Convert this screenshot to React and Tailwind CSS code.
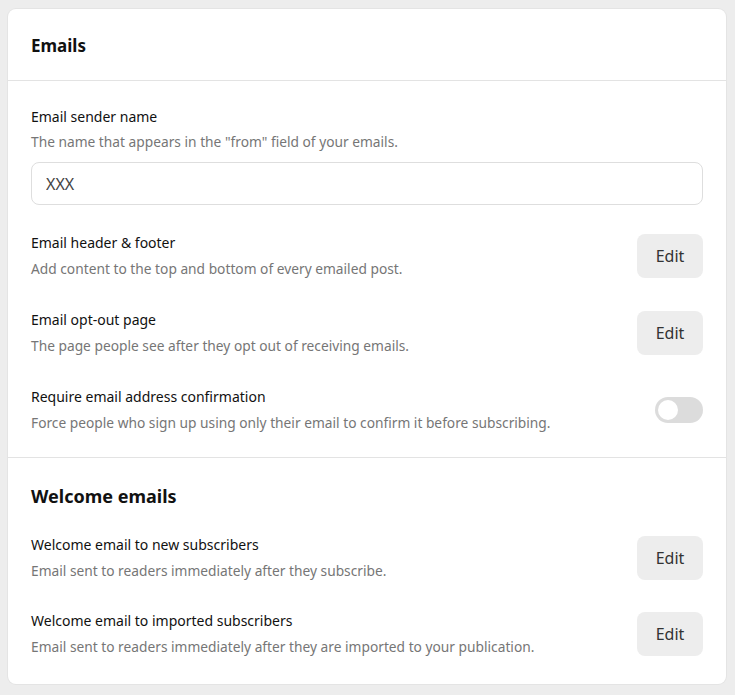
import { useState } from 'react';

const FONT = { fontFamily: '"Noto Sans", "Open Sans", sans-serif' };

function EditButton() {
  return (
    <button className="h-[44px] w-[66px] shrink-0 rounded-lg bg-[#ededed] text-[16px] text-[#333] hover:bg-[#e2e2e2]">
      Edit
    </button>
  );
}

function Toggle() {
  const [on, setOn] = useState(false);
  return (
    <button
      onClick={() => setOn(v => !v)}
      className={`relative h-[26px] w-[48px] shrink-0 rounded-full transition ${on ? 'bg-[#333]' : 'bg-[#dcdcdc]'}`}
    >
      <span
        className={`absolute top-[3px] h-[20px] w-[20px] rounded-full bg-white transition-all ${on ? 'left-[25px]' : 'left-[3px]'}`}
      />
    </button>
  );
}

function SettingRow({ title, desc, action, className = '' }) {
  return (
    <div className={`flex items-center justify-between gap-6 ${className}`}>
      <div>
        <div className="text-[14px] leading-5 text-[#111]">{title}</div>
        <div className="mt-[6px] text-[13.75px] leading-5 text-[#767676]">{desc}</div>
      </div>
      {action}
    </div>
  );
}

export default function App() {
  const [sender, setSender] = useState('XXX');

  return (
    <div className="min-h-screen bg-[#ededed] px-[8px] pt-[9px] pb-[10px]" style={FONT}>
      <div className="w-[718px] rounded-lg bg-white shadow-[0_0_0_1px_#e4e4e4]">
        <div className="flex h-[72px] items-center border-b border-[#e3e3e3] px-[23px] pt-[3px]">
          <h2 className="text-[17px] font-bold text-[#111]">Emails</h2>
        </div>

        <div className="border-b border-[#e3e3e3] px-[23px] pt-[26px] pb-[24px]">
          <div className="text-[14px] leading-5 text-[#111]">Email sender name</div>
          <div className="mt-[5px] text-[13.75px] leading-5 text-[#767676]">
            The name that appears in the "from" field of your emails.
          </div>
          <input
            value={sender}
            onChange={e => setSender(e.target.value)}
            className="mt-[10px] h-[43px] w-full rounded-lg border border-[#dedede] px-[14px] text-[16px] text-[#444] outline-none"
          />

          <SettingRow
            className="mt-[28px]"
            title="Email header & footer"
            desc="Add content to the top and bottom of every emailed post."
            action={<EditButton />}
          />
          <SettingRow
            className="mt-[31px]"
            title="Email opt-out page"
            desc="The page people see after they opt out of receiving emails."
            action={<EditButton />}
          />
          <SettingRow
            className="mt-[31px]"
            title="Require email address confirmation"
            desc="Force people who sign up using only their email to confirm it before subscribing."
            action={<Toggle />}
          />
        </div>

        <div className="px-[23px] pt-[26px] pb-[27px]">
          <h2 className="text-[18px] font-bold leading-6 text-[#111]">Welcome emails</h2>
          <SettingRow
            className="mt-[27px]"
            title="Welcome email to new subscribers"
            desc="Email sent to readers immediately after they subscribe."
            action={<EditButton />}
          />
          <SettingRow
            className="mt-[30px]"
            title="Welcome email to imported subscribers"
            desc="Email sent to readers immediately after they are imported to your publication."
            action={<EditButton />}
          />
        </div>
      </div>
    </div>
  );
}
